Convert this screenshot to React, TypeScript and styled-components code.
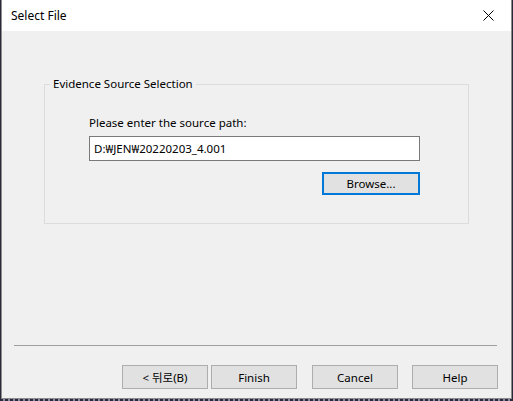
import * as React from 'react';
import styled, { createGlobalStyle } from 'styled-components';

const GlobalStyle = createGlobalStyle`
  html, body {
    margin: 0;
    padding: 0;
    width: 513px;
    height: 401px;
    overflow: hidden;
    background-color: #3b3b52;
    background-image: repeating-linear-gradient(90deg, #2a2a3a 0px, #2a2a3a 3px, #8a8aa8 3px, #8a8aa8 5px);
  }
  #root {
    padding-left: 1px;
  }
`;

const Window = styled.div`
  box-sizing: border-box;
  width: 511px;
  height: 399px;
  display: flex;
  flex-direction: column;
  border: 1px solid #8c8c8c;
  border-top: none;
  background: #f0f0f0;
  font-family: "Noto Sans", "Noto Sans CJK KR", sans-serif;
  font-size: 11.5px;
  color: #000;
`;

const TitleBar = styled.div`
  height: 31px;
  display: flex;
  align-items: center;
  justify-content: space-between;
  background: #fff;
  padding-left: 9px;
`;

const Title = styled.span`
  font-size: 12px;
`;

const CloseButton = styled.div`
  width: 46px;
  height: 31px;
  display: flex;
  align-items: center;
  justify-content: center;
`;

const Content = styled.div`
  flex: 1;
  display: flex;
  flex-direction: column;
  padding: 45px 42px 0 42px;
`;

const GroupBox = styled.fieldset`
  margin: 0;
  padding: 23px 48px 28px 44px;
  border: 1px solid #dcdcdc;
  height: 148px;
  box-sizing: border-box;
  display: flex;
  flex-direction: column;
`;

const Legend = styled.legend`
  padding: 0 3px;
  margin-left: -39px;
  line-height: 16px;
`;

const FieldLabel = styled.label`
  line-height: 16px;
  margin-bottom: 5px;
`;

const PathInput = styled.input`
  box-sizing: border-box;
  height: 25px;
  width: 100%;
  border: 1px solid #7a7a7a;
  background: #fff;
  padding: 0 4px;
  font: inherit;
  outline: none;
`;

const BrowseRow = styled.div`
  display: flex;
  justify-content: flex-end;
  margin-top: 11px;
`;

const Button = styled.button<{ $focused?: boolean }>`
  box-sizing: border-box;
  height: ${p => (p.$focused ? 23 : 24)}px;
  width: ${p => (p.$focused ? 98 : 86)}px;
  background: #e1e1e1;
  border: ${p => (p.$focused ? '2px solid #0078d7' : '1px solid #adadad')};
  padding: 0;
  font: inherit;
  color: #000;
`;

const Spacer = styled.div`
  flex: 1;
`;

const Separator = styled.div`
  height: 1px;
  background: #a0a0a0;
  margin: 0 -28px 19px -30px;
`;

const Footer = styled.div`
  display: flex;
  justify-content: flex-end;
  margin-right: -29px;
  margin-bottom: 9px;
`;

const FooterButton = styled(Button)<{ $gap: number }>`
  margin-left: ${p => p.$gap}px;
`;

export default function App() {
  return (
    <>
      <GlobalStyle />
      <Window>
        <TitleBar>
          <Title>Select File</Title>
          <CloseButton>
            <svg width="11" height="11" viewBox="0 0 11 11">
              <path d="M0.5 0.5 L10.5 10.5 M10.5 0.5 L0.5 10.5" stroke="#000" strokeWidth="1" />
            </svg>
          </CloseButton>
        </TitleBar>
        <Content>
          <GroupBox>
            <Legend>Evidence Source Selection</Legend>
            <FieldLabel htmlFor="src">Please enter the source path:</FieldLabel>
            <PathInput id="src" defaultValue="D:₩JEN₩20220203_4.001" />
            <BrowseRow>
              <Button $focused>Browse...</Button>
            </BrowseRow>
          </GroupBox>
          <Spacer />
          <Separator />
          <Footer>
            <FooterButton $gap={0}>&lt; 뒤로(B)</FooterButton>
            <FooterButton $gap={3}>Finish</FooterButton>
            <FooterButton $gap={15}>Cancel</FooterButton>
            <FooterButton $gap={14}>Help</FooterButton>
          </Footer>
        </Content>
      </Window>
    </>
  );
}
